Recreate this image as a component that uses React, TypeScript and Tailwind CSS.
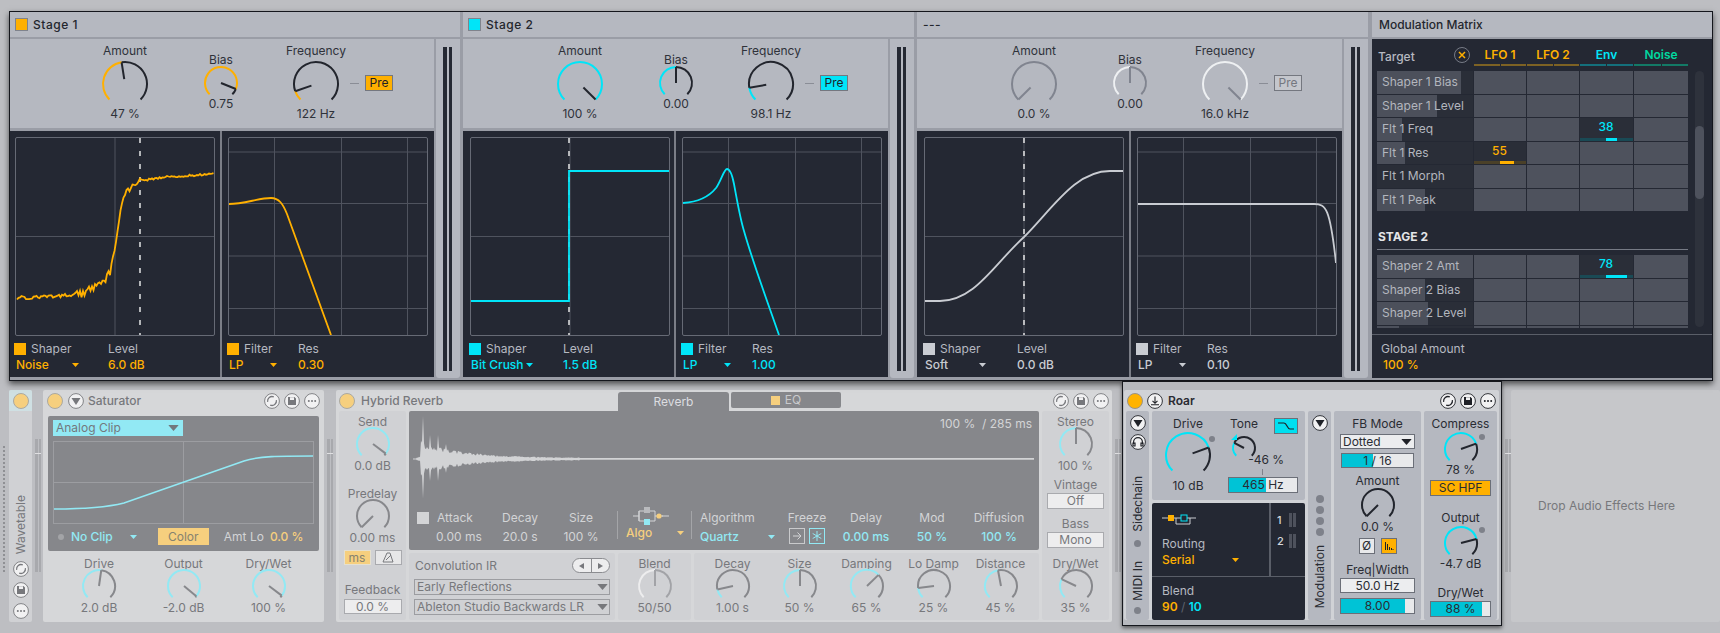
import type { ReactNode } from "react";

const ORANGE = "#ffb000";
const CYAN = "#00e5f8";
const SOFT_CYAN = "#92e9f4";

// build a knob arc between two normalised values
function arc(cx: number, cy: number, r: number, a: number, b: number) {
  const pt = (p: number) => {
    const t = ((-135 + 270 * p) * Math.PI) / 180;
    return `${(cx + r * Math.sin(t)).toFixed(2)} ${(cy - r * Math.cos(t)).toFixed(2)}`;
  };
  const large = (b - a) * 270 > 180 ? 1 : 0;
  return `M${pt(a)} A${r} ${r} 0 ${large} 1 ${pt(b)}`;
}

function Knob({ r, pct, fill, track, needle, start = 0 }: { r: number; pct: number; fill: string; track: string; needle?: string; start?: number }) {
  const c = r + 2;
  const h = c + Math.ceil(r * 0.8);
  const t = ((-135 + 270 * pct) * Math.PI) / 180;
  return (
    <svg width={c * 2} height={h} className="block shrink-0" aria-hidden="true">
      {pct < 1 && <path d={arc(c, c, r, Math.max(pct, 0.001), 1)} fill="none" stroke={track} strokeWidth="2" />}
      {pct > 0 && <path d={arc(c, c, r, 0, pct)} fill="none" stroke={fill} strokeWidth="2" />}
      <line
        x1={c + r * start * Math.sin(t)}
        y1={c - r * start * Math.cos(t)}
        x2={c + r * Math.sin(t)}
        y2={c - r * Math.cos(t)}
        stroke={needle ?? track}
        strokeWidth="2"
      />
    </svg>
  );
}

function Cell(props: {
  w: string;
  label: string;
  value: string;
  r?: number;
  pct: number;
  fill: string;
  track: string;
  needle?: string;
  start?: number;
  knobClass?: string;
  textClass?: string;
}) {
  const { w, label, value, r = 16, pct, fill, track, needle, start, knobClass = "-mt-[3px] mb-[2px]", textClass = "text-[#77787c]" } = props;
  return (
    <div className={`${w} flex flex-col items-center shrink-0 text-[12px] leading-[14px] whitespace-nowrap ${textClass}`}>
      <span>{label}</span>
      <div className={knobClass}>
        <Knob r={r} pct={pct} fill={fill} track={track} needle={needle} start={start} />
      </div>
      <span>{value}</span>
    </div>
  );
}

/* ---------- graphs ---------- */

function lerp(points: number[][], x: number) {
  for (let i = 1; i < points.length; i++) {
    if (x <= points[i][0]) {
      const [x0, y0] = points[i - 1];
      const [x1, y1] = points[i];
      return y0 + ((y1 - y0) * (x - x0)) / (x1 - x0);
    }
  }
  return points[points.length - 1][1];
}

function rnd(n: number) {
  const v = Math.sin(n * 12.9898) * 43758.5453;
  return v - Math.floor(v);
}

const noiseCurve = (() => {
  const keys = [[1, 160], [40, 158], [65, 156], [85, 147], [94, 135], [99, 112], [102, 93], [105, 72], [108, 56], [115, 50], [123, 43], [151, 39], [198, 36]];
  const out: string[] = [];
  for (let x = 1; x <= 198; x += 1.5) {
    const amp = x < 60 ? 3.5 : x < 108 ? 8 : x < 125 ? 4.5 : 2;
    out.push(`${x} ${(lerp(keys, x) + (rnd(x) - 0.5) * amp).toFixed(1)}`);
  }
  return "M" + out.join(" L");
})();

const reverbShape = (() => {
  const amp = (x: number) => {
    if (x < 8) return 0.6;
    let a = x < 12 ? 2 : 1 + 15 * Math.exp(-(x - 12) / 42);
    if (x > 170) a = 0.9;
    else a *= 0.65 + rnd(x * 3) * 0.5;
    if (Math.abs(x - 14) < 1) a = 43;
    if (Math.abs(x - 21) < 1) a = 24;
    if (Math.abs(x - 29) < 1) a = 24;
    if (Math.abs(x - 37) < 1) a = 15;
    return a;
  };
  const top: string[] = [];
  const bottom: string[] = [];
  for (let x = 4; x <= 625; x += 1) {
    top.push(`${x} ${(48 - amp(x)).toFixed(1)}`);
    bottom.unshift(`${x} ${(48 + amp(x) * 0.92).toFixed(1)}`);
  }
  return "M" + top.concat(bottom).join(" L") + "Z";
})();

function Graph({ children }: { children: ReactNode }) {
  return (
    <svg width="200" height="199" className="block rounded-[2px] border border-[#666a75]" viewBox="0 0 198 197" aria-hidden="true">
      {children}
    </svg>
  );
}

function ShaperGraph({ curve, color, dash, width = 1.8 }: { curve: string; color: string; dash: number; width?: number }) {
  return (
    <Graph>
      <line x1="99" y1="0" x2="99" y2="197" stroke="#4f535e" />
      <line x1="0" y1="98.5" x2="198" y2="98.5" stroke="#4f535e" />
      <line x1={dash} y1="0" x2={dash} y2="197" stroke="#f2f2f2" strokeWidth="1.4" strokeDasharray="5 8" />
      <path d={curve} fill="none" stroke={color} strokeWidth={width} />
    </Graph>
  );
}

function FilterGraph({ curve, color }: { curve: string; color: string }) {
  return (
    <Graph>
      {[45.5, 112.5, 178.5].map((x) => (
        <line key={x} x1={x} y1="0" x2={x} y2="197" stroke="#4f535e" />
      ))}
      {[14, 65.5, 118, 170.5].map((y) => (
        <line key={y} x1="0" y1={y} x2="198" y2={y} stroke="#4f535e" />
      ))}
      <path d={curve} fill="none" stroke={color} strokeWidth="1.8" />
    </Graph>
  );
}

function Caret({ color, className = "" }: { color: string; className?: string }) {
  return (
    <svg width="7" height="4" viewBox="0 0 7 4" className={`block ${className}`} aria-hidden="true">
      <path d="M0 0H7L3.5 4Z" fill={color} />
    </svg>
  );
}

/* ---------- top window ---------- */

function GraphFooter(props: { color: string; cols: string; a: string; mode: string; b: string; value: string; caretGap: string }) {
  const { color, cols, a, mode, b, value, caretGap } = props;
  return (
    <div className={`grid ${cols} mt-[6px] text-[12px] leading-[14px] gap-y-[2px] whitespace-nowrap`}>
      <div className="flex items-center text-[#b6b9c1]">
        <span className="w-[12px] h-[12px] mr-[5px] -ml-[1px]" style={{ background: color }} />
        {a}
      </div>
      <div className="text-[#b6b9c1]">{b}</div>
      <div className="flex items-center font-medium relative pl-[1px]" style={{ color }}>
        {mode}
        <Caret color={color} className={caretGap} />
      </div>
      <div className="font-medium" style={{ color }}>{value}</div>
    </div>
  );
}

function Stage(props: {
  w: string;
  title: string;
  square?: string;
  knobs: string;
  pad: string;
  left: string;
  color: string;
  accent: string;
  track: string;
  needle: string;
  amount: [number, string];
  bias: [number, string];
  freq: [number, string];
  shaper: string;
  dash: number;
  filter: string;
  mode: string;
  modeGap: string;
  level: string;
  res: string;
  preClass: string;
}) {
  const { w, title, square, knobs, pad, left, color, accent, track, needle, amount, bias, freq, shaper, dash, filter, mode, modeGap, level, res, preClass } = props;
  const text = "text-[#2f323a]";
  return (
    <section className={`${w} shrink-0 flex flex-col`}>
      <div className="h-[25px] bg-[#b5b8c0] flex items-center pl-[5px] text-[12px] text-[#23262d] font-medium tracking-[0.5px]">
        {square && <span className="w-[13px] h-[13px] mr-[5px] border border-[#7f838c]" style={{ background: square }} />}
        {!square && <span className="w-[1px]" />}
        {title}
      </div>
      <div className="flex gap-[2px] mt-[2px] h-[339px]">
        <div className="flex-1 flex flex-col gap-[3px]">
          <div className={`h-[89px] bg-[#b5b8c0] flex items-start ${knobs}`}>
            <div className="pt-[5px]">
              <Cell w="w-[100px]" label="Amount" value={amount[1]} r={22} pct={amount[0]} fill={color} track={track} needle={needle} start={0.22} knobClass="mt-[2px] mb-[5px]" textClass={text} />
            </div>
            <div className="pt-[14px] ml-[16px]">
              <Cell w="w-[60px]" label="Bias" value={bias[1]} pct={bias[0]} fill={color} track={track} needle={needle} knobClass="-mt-[2px] mb-[1px]" textClass={text} />
            </div>
            <div className="pt-[5px] ml-[15px]">
              <Cell w="w-[100px]" label="Frequency" value={freq[1]} r={22} pct={freq[0]} fill={color} track={track} needle={needle} start={0.22} knobClass="mt-[2px] mb-[5px]" textClass={text} />
            </div>
            <div className="flex items-center mt-[36px] -ml-[16px]">
              <span className="w-[9px] h-px bg-[#8a8d96]" />
              <span className={`ml-[6px] w-[28px] h-[16px] flex items-center justify-center text-[12px] border ${preClass}`}>Pre</span>
            </div>
          </div>
          <div className="h-[246px] bg-[#242833] flex">
            <div className={`${left} bg-[#242833] pt-[6px] ${pad} shrink-0`}>
              <ShaperGraph curve={shaper} color={accent} dash={dash} />
              <GraphFooter color={accent} cols="grid-cols-[93px_1fr]" a="Shaper" mode={mode} b="Level" value={level} caretGap={modeGap} />
            </div>
            <div className="w-[2px] bg-[#7b7e87]" />
            <div className="flex-1 pt-[6px] pl-[6px]">
              <FilterGraph curve={filter} color={accent} />
              <GraphFooter color={accent} cols="grid-cols-[70px_1fr]" a="Filter" mode="LP" b="Res" value={res} caretGap="ml-[27px]" />
            </div>
          </div>
        </div>
        <div className="w-[24px] bg-[#b5b8c0] rounded-b-[3px] pt-[8px] pl-[7px]">
          <div className="flex gap-[2px] h-[324px]">
            <span className="w-[3.5px] bg-[#252933]" />
            <span className="w-[3.5px] bg-[#252933]" />
          </div>
        </div>
      </div>
    </section>
  );
}

const targetsA: [string, number][] = [
  ["Shaper 1 Bias", 87],
  ["Shaper 1 Level", 62],
  ["Flt 1 Freq", 26],
  ["Flt 1 Res", 29],
  ["Flt 1 Morph", 0],
  ["Flt 1 Peak", 50],
];
const targetsB: [string, number][] = [
  ["Shaper 2 Amt", 100],
  ["Shaper 2 Bias", 50],
  ["Shaper 2 Level", 53],
  ["", 23],
];

function MatrixRow({ name, pct, active }: { name: string; pct: number; active?: { col: number; value: string; color: string; barLeft: string; barWidth: string; dim: string } }) {
  return (
    <div className="contents">
      <div className="h-[22.5px] bg-[#2a2e38] relative flex items-center">
        <div className="absolute inset-y-0 left-0 bg-[#4c505b]" style={{ width: `${pct}%` }} />
        <span className="relative pl-[5px] text-[12px] text-[#b3b6be] whitespace-nowrap">{name}</span>
      </div>
      {[0, 1, 2, 3].map((col) =>
        active && active.col === col ? (
          <div key={col} className="h-[22.5px] bg-[#2a2e38] flex flex-col items-center justify-between">
            <span className="text-[12px] leading-[18px] font-medium pr-[1px]" style={{ color: active.color }}>{active.value}</span>
            <span className="block w-full h-[3px] relative" style={{ background: active.dim }}>
              <span className={`absolute top-0 h-[3px] ${active.barLeft} ${active.barWidth}`} style={{ background: active.color }} />
            </span>
          </div>
        ) : (
          <div key={col} className="h-[22.5px] bg-[#4e525d]" />
        ),
      )}
    </div>
  );
}

function ModMatrix() {
  const grid = "grid grid-cols-[96px_52px_52px_53px_54px] gap-x-[1px] gap-y-[1px]";
  const heads: [string, string, string][] = [
    ["LFO 1", ORANGE, "#7d6224"],
    ["LFO 2", ORANGE, "#7d6224"],
    ["Env", CYAN, "#14707c"],
    ["Noise", "#00d9a0", "#137a66"],
  ];
  return (
    <section className="w-[340px] ml-[1px] shrink-0 flex flex-col">
      <div className="h-[25px] bg-[#b5b8c0] flex items-center pl-[7px] text-[12px] text-[#23262d] font-medium">Modulation Matrix</div>
      <div className="mt-[2px] h-[339px] bg-[#242833] flex flex-col">
        <div className="h-[295px] pl-[5px]">
          <div className={`${grid} pt-[8px] h-[32px]`}>
            <div className="flex items-start justify-between pr-[3px] text-[12px] text-[#b6b9c1]">
              <span className="pl-[1px] pt-[1px] font-medium">Target</span>
              <span className="w-[16px] h-[16px] rounded-full border border-[#777b86] flex items-center justify-center">
                <svg width="8" height="8" viewBox="0 0 8 8" aria-hidden="true">
                  <path d="M1 1L7 7M7 1L1 7" stroke={ORANGE} strokeWidth="1.5" />
                </svg>
              </span>
            </div>
            {heads.map(([t, c, dim]) => (
              <div key={t} className="flex flex-col items-center">
                <span className="text-[12px] leading-[15px] font-semibold" style={{ color: c }}>{t}</span>
                <span className="flex gap-[1px] w-full h-[2px] mt-[2px]">
                  <span className="flex-1" style={{ background: dim }} />
                  <span className="flex-1" style={{ background: dim }} />
                </span>
              </div>
            ))}
          </div>
          <div className="flex">
            <div className="w-[311px] h-[257px] overflow-hidden">
              <div className={grid}>
                {targetsA.map(([n, p]) => (
                  <MatrixRow
                    key={n}
                    name={n}
                    pct={p}
                    active={
                      n === "Flt 1 Freq"
                        ? { col: 2, value: "38", color: CYAN, barLeft: "left-[26px]", barWidth: "w-[11px]", dim: "#1a4a55" }
                        : n === "Flt 1 Res"
                          ? { col: 0, value: "55", color: ORANGE, barLeft: "left-[26px]", barWidth: "w-[14px]", dim: "#4a4028" }
                          : undefined
                    }
                  />
                ))}
              </div>
              <div className="h-[39px] flex items-end pb-[5px] pl-[1px] text-[12px] font-bold text-[#e4e5e8] leading-[14px] border-b border-[#767a85]">STAGE 2</div>
              <div className={`${grid} mt-[5px]`}>
                {targetsB.map(([n, p]) => (
                  <MatrixRow
                    key={n || "clipped"}
                    name={n}
                    pct={p}
                    active={n === "Shaper 2 Amt" ? { col: 2, value: "78", color: CYAN, barLeft: "left-[26px]", barWidth: "w-[21px]", dim: "#1a4a55" } : undefined}
                  />
                ))}
              </div>
            </div>
            <div className="w-[9px] h-[256px] ml-[7px] rounded-full bg-[#2e323c] pt-[55px]">
              <div className="h-[73px] rounded-full bg-[#4e525d]" />
            </div>
          </div>
        </div>
        <div className="h-px bg-[#5a5e68]" />
        <div className="pl-[9px] pt-[6px] text-[12px] leading-[16px]">
          <div className="text-[#b6b9c1]">Global Amount</div>
          <div className="pl-[2px] font-medium text-[#ffb000]">100 %</div>
        </div>
      </div>
    </section>
  );
}

/* ---------- device chrome ---------- */

function CircleIcon({ kind, dark = false }: { kind: "sync" | "save" | "more" | "down" | "save-arrow" | "phones"; dark?: boolean }) {
  const c = dark ? "#1f2127" : "#77787c";
  return (
    <svg width="16" height="16" viewBox="0 0 16 16" className="block shrink-0" aria-hidden="true">
      <circle cx="8" cy="8" r="7.4" fill="#f1f1f2" stroke={c} strokeWidth="0.9" />
      {kind === "sync" && (
        <g fill="none" stroke={c} strokeWidth="1.3">
          <path d="M3.6 8.8A4.5 4.5 0 0 1 9.8 3.9" />
          <path d="M12.4 7.2A4.5 4.5 0 0 1 6.2 12.1" />
        </g>
      )}
      {kind === "save" && <path d="M4 4H10.5L12 5.5V12H4ZM6 4.2V7H10V4.2Z" fill={c} fillRule="evenodd" />}
      {kind === "more" && (
        <g fill={c}>
          <circle cx="4.8" cy="8" r="1" />
          <circle cx="8" cy="8" r="1" />
          <circle cx="11.2" cy="8" r="1" />
        </g>
      )}
      {kind === "down" && <path d="M3.5 5H12.5L8 12Z" fill={c} />}
      {kind === "save-arrow" && <path d="M8 3.5V10M5.5 7.8L8 10.3L10.5 7.8M4 11.8H12" fill="none" stroke={c} strokeWidth="1.1" />}
      {kind === "phones" && <path d="M3.6 10V8A4.4 4.4 0 0 1 12.4 8V10M3 9H5V12H3ZM11 9H13V12H11Z" fill="none" stroke={c} strokeWidth="1.2" />}
    </svg>
  );
}

function Led({ color = "#f6cf7e", border = "#aaa9a2" }: { color?: string; border?: string }) {
  return <span className="w-[16px] h-[16px] rounded-full shrink-0 border" style={{ background: color, borderColor: border }} />;
}

function Grip() {
  return (
    <div className="w-[6px] ml-[3px] mt-[49px] h-[133px] flex flex-col shrink-0">
      <div className="h-[14px] flex gap-[1px]">
        <span className="flex-1 bg-[#a8a9ad]" />
        <span className="flex-1 bg-[#a8a9ad]" />
      </div>
      <div className="h-[1px] bg-[#e0e0e2]" />
      <div className="flex-1 flex gap-[1px]">
        <span className="flex-1 bg-[#a8a9ad]" />
        <span className="flex-1 bg-[#a8a9ad]" />
      </div>
    </div>
  );
}

function Vertical({ children, className = "" }: { children: ReactNode; className?: string }) {
  return <span className={`[writing-mode:vertical-rl] rotate-180 whitespace-nowrap text-[12px] leading-[14px] ${className}`}>{children}</span>;
}

function Saturator() {
  return (
    <div className="w-[281px] ml-[2px] h-[232px] bg-[#d6d7d9] rounded-[2px] shrink-0">
      <div className="h-[21px] flex items-center px-[4px] gap-[5px]">
        <Led />
        <CircleIcon kind="down" />
        <span className="text-[12px] font-medium text-[#77787c] ml-[-1px]">Saturator</span>
        <div className="ml-auto flex gap-[4px] pr-[0px]">
          <CircleIcon kind="sync" />
          <CircleIcon kind="save" />
          <CircleIcon kind="more" />
        </div>
      </div>
      <div className="mx-[5px] mt-[5px] h-[135px] bg-[#86878b] rounded-[2px] pt-[4px] pl-[5px]">
        <div className="w-[130px] h-[16px] bg-[#92e9f4] flex items-center justify-between px-[3px] text-[12px] text-[#72787d]">
          Analog Clip
          <Caret color="#72787d" className="scale-150 mr-[3px]" />
        </div>
        <svg width="261" height="83" className="block mt-[5px] border border-[#9c9da1]" viewBox="0 0 259 81" aria-hidden="true">
          <line x1="129.5" y1="0" x2="129.5" y2="81" stroke="#9c9da1" />
          <line x1="0" y1="40.5" x2="259" y2="40.5" stroke="#9c9da1" />
          <path d="M0 67 C30 67 50 66 70 61 L190 19 C205 14 225 14 259 14" fill="none" stroke={SOFT_CYAN} strokeWidth="1.6" />
        </svg>
        <div className="flex items-center h-[17px] mt-[4px] text-[12px]">
          <span className="w-[6px] h-[6px] rounded-full bg-[#a3a4a7] ml-[5px]" />
          <span className="ml-[7px] text-[#92e9f4] font-medium">No Clip</span>
          <Caret color={SOFT_CYAN} className="ml-[17px]" />
          <span className="ml-[21px] w-[51px] h-[17px] bg-[#f6cf7e] flex items-center justify-center text-[#85826f]">Color</span>
          <span className="ml-[15px] text-[#d3d4d6]">Amt Lo</span>
          <span className="ml-[6px] font-medium text-[#f6cf7e]">0.0 %</span>
        </div>
      </div>
      <div className="flex pl-[14px] mt-[6px]">
        <Cell w="w-[84px]" label="Drive" value="2.0 dB" pct={0.53} fill={SOFT_CYAN} track="#87888c" />
        <Cell w="w-[85px]" label="Output" value="-2.0 dB" pct={0.98} fill={SOFT_CYAN} track="#87888c" />
        <Cell w="w-[85px]" label="Dry/Wet" value="100 %" pct={0.97} fill={SOFT_CYAN} track="#87888c" needle="#87888c" />
      </div>
    </div>
  );
}

function AlgoIcon() {
  return (
    <svg width="36" height="18" viewBox="0 0 36 18" className="block ml-[7px]" aria-hidden="true">
      <path d="M0 9H6M30 9H22M6 4H22V14H6ZM6 4V14" fill="none" stroke="#d3d4d6" strokeWidth="1" />
      <rect x="11" y="0" width="6" height="6" fill="#b9babd" />
      <rect x="11" y="12" width="6" height="6" fill={SOFT_CYAN} />
      <circle cx="26" cy="9" r="2.6" fill="#f6cf7e" />
      <path d="M29 9H36" stroke="#d3d4d6" />
    </svg>
  );
}

function Reverb() {
  const ctl = "text-[12px] leading-[14px] whitespace-nowrap";
  const knob = { fill: SOFT_CYAN, track: "#87888c" };
  return (
    <div className="w-[776px] ml-[3px] h-[232px] bg-[#d6d7d9] rounded-[2px] shrink-0">
      <div className="h-[21px] flex">
        <div className="w-[282px] flex items-center pl-[3px] gap-[6px] shrink-0">
          <Led />
          <span className="text-[12px] font-medium text-[#77787c]">Hybrid Reverb</span>
        </div>
        <div className="w-[111px] h-[19px] mt-[2px] rounded-t-[3px] bg-[#86878b] flex items-center justify-center text-[12px] text-[#dcdde0]">Reverb</div>
        <div className="w-[110px] h-[16px] mt-[2px] ml-[2px] rounded-[2px] bg-[#86878b] flex items-center justify-center gap-[5px] text-[12px] text-[#c9cacc]">
          <span className="w-[9px] h-[9px] bg-[#f6cf7e]" />
          EQ
        </div>
        <div className="ml-auto flex items-center gap-[4px] pr-[3px]">
          <CircleIcon kind="sync" />
          <CircleIcon kind="save" />
          <CircleIcon kind="more" />
        </div>
      </div>
      <div className="flex gap-[3px] pl-[3px]">
        {/* send column */}
        <div className="w-[67px] h-[209px] bg-[#d0d1d4] rounded-[2px] flex flex-col items-center pt-[4px] text-[#77787c]">
          <Cell w="w-full" label="Send" value="0.0 dB" pct={0.97} {...knob} needle="#87888c" />
          <div className="mt-[14px]">
            <Cell w="w-[67px]" label="Predelay" value="0.00 ms" pct={0} {...knob} />
          </div>
          <div className="flex gap-[4px] mt-[5px]">
            <span className="w-[27px] h-[15px] bg-[#f6cf7e] border border-[#e5e0cf] flex items-center justify-center text-[12px] text-[#85826f]">ms</span>
            <span className="w-[27px] h-[15px] bg-[#e7e7e8] border border-[#a9aaae] flex items-center justify-center">
              <svg width="12" height="11" viewBox="0 0 12 11" aria-hidden="true">
                <path d="M1 10H11L8 1H5ZM4 8L9 3" fill="none" stroke="#77787c" />
              </svg>
            </span>
          </div>
          <span className="mt-[18px] text-[12px] leading-[14px]">Feedback</span>
          <span className="w-[58px] h-[15px] mt-[2px] bg-[#ededee] border border-[#a9aaae] flex items-center justify-center text-[12px]">0.0 %</span>
        </div>
        {/* main column */}
        <div className="w-[630px] shrink-0">
          <div className="h-[139px] bg-[#86878b] rounded-[2px] relative">
            <svg width="630" height="94" className="block" aria-hidden="true">
              <path d={reverbShape} fill="#d2d3d5" />
            </svg>
            <span className="absolute right-[7px] top-[4px] text-[12px] text-[#d3d4d6]">100 %&nbsp; / 285 ms</span>
            <div className={`flex mt-[6px] ${ctl} text-[#d3d4d6]`}>
              <div className="w-[74px] ml-[8px] shrink-0">
                <div className="flex items-center">
                  <span className="w-[12px] h-[12px] bg-[#d3d4d6] mr-[8px]" />
                  Attack
                </div>
                <div className="pl-[19px] mt-[5px]">0.00 ms</div>
              </div>
              <div className="w-[58px] text-center shrink-0">
                <div>Decay</div>
                <div className="mt-[5px]">20.0 s</div>
              </div>
              <div className="w-[64px] text-center shrink-0">
                <div>Size</div>
                <div className="mt-[5px]">100 %</div>
              </div>
              <span className="w-px h-[28px] ml-[4px] bg-[#a4a5a8] shrink-0" />
              <div className="w-[59px] ml-[8px] shrink-0 -mt-[4px]">
                <AlgoIcon />
                <div className="flex items-center font-medium text-[#f6cf7e] mt-[1px]">
                  Algo
                  <Caret color="#f6cf7e" className="ml-[25px]" />
                </div>
              </div>
              <span className="w-px h-[28px] ml-[6px] bg-[#a4a5a8] shrink-0" />
              <div className="w-[80px] ml-[8px] shrink-0">
                <div>Algorithm</div>
                <div className="flex items-center mt-[5px] font-medium text-[#92e9f4]">
                  Quartz
                  <Caret color={SOFT_CYAN} className="ml-[29px]" />
                </div>
              </div>
              <div className="w-[54px] shrink-0 flex flex-col items-center">
                <span>Freeze</span>
                <div className="flex gap-[4px] mt-[3px]">
                  <span className="w-[16px] h-[16px] border border-[#c9cacc] flex items-center justify-center">
                    <svg width="10" height="10" viewBox="0 0 10 10" aria-hidden="true">
                      <path d="M1 5H9M5.5 1.5L9 5L5.5 8.5" fill="none" stroke="#d3d4d6" />
                    </svg>
                  </span>
                  <span className="w-[16px] h-[16px] border border-[#92e9f4] flex items-center justify-center">
                    <svg width="10" height="10" viewBox="0 0 10 10" aria-hidden="true">
                      <path d="M5 0V10M.7 2.5L9.3 7.5M9.3 2.5L.7 7.5" fill="none" stroke={SOFT_CYAN} />
                    </svg>
                  </span>
                </div>
              </div>
              {[["Delay", "0.00 ms", "w-[64px]"], ["Mod", "50 %", "w-[68px]"], ["Diffusion", "100 %", "w-[66px]"]].map(([a, b, w]) => (
                <div key={a} className={`${w} text-center shrink-0`}>
                  <div>{a}</div>
                  <div className="mt-[5px] font-medium text-[#92e9f4]">{b}</div>
                </div>
              ))}
            </div>
          </div>
          <div className="flex gap-[3px] mt-[3px] h-[67px]">
            <div className="w-[206px] bg-[#d0d1d4] rounded-[2px] pl-[5px] pt-[5px] text-[12px] text-[#77787c]">
              <div className="flex items-center h-[15px] justify-between pr-[5px] pl-[1px]">
                Convolution IR
                <span className="w-[38px] h-[15px] rounded-full border border-[#8b8c90] bg-[#ededee] flex">
                  <span className="flex-1 flex items-center justify-center border-r border-[#8b8c90]">
                    <svg width="5" height="6" viewBox="0 0 5 6" aria-hidden="true"><path d="M5 0V6L0 3Z" fill="#77787c" /></svg>
                  </span>
                  <span className="flex-1 flex items-center justify-center">
                    <svg width="5" height="6" viewBox="0 0 5 6" aria-hidden="true"><path d="M0 0V6L5 3Z" fill="#77787c" /></svg>
                  </span>
                </span>
              </div>
              {["Early Reflections", "Ableton Studio Backwards LR"].map((t, i) => (
                <div key={t} className={`w-[196px] h-[16px] border border-[#9c9da1] flex items-center justify-between pl-[2px] pr-[2px] ${i === 0 ? "mt-[6px]" : "mt-[4px]"}`}>
                  {t}
                  <Caret color="#77787c" className="scale-150 mr-[1px]" />
                </div>
              ))}
            </div>
            <div className="w-[73px] bg-[#d0d1d4] rounded-[2px] pt-[4px]">
              <Cell w="w-full" label="Blend" value="50/50" pct={0.5} fill="#ededee" track="#a2a3a7" />
            </div>
            <div className="flex-1 bg-[#d0d1d4] rounded-[2px] pt-[4px] pl-[5px] flex">
              <Cell w="w-[67px]" label="Decay" value="1.00 s" pct={0.12} {...knob} />
              <Cell w="w-[67px]" label="Size" value="50 %" pct={0.5} {...knob} />
              <Cell w="w-[67px]" label="Damping" value="65 %" pct={0.67} {...knob} />
              <Cell w="w-[67px]" label="Lo Damp" value="25 %" pct={0.14} {...knob} />
              <Cell w="w-[67px]" label="Distance" value="45 %" pct={0.46} {...knob} />
            </div>
          </div>
        </div>
        {/* output column */}
        <div className="w-[67px] h-[209px] bg-[#d0d1d4] rounded-[2px] flex flex-col items-center pt-[4px] text-[12px] leading-[14px] text-[#77787c]">
          <Cell w="w-full" label="Stereo" value="100 %" pct={0.5} {...knob} />
          <span className="mt-[5px]">Vintage</span>
          <span className="w-[57px] h-[16px] mt-[1px] bg-[#ededee] border border-[#a9aaae] flex items-center justify-center">Off</span>
          <span className="mt-[8px]">Bass</span>
          <span className="w-[57px] h-[16px] mt-[1px] bg-[#ededee] border border-[#a9aaae] flex items-center justify-center">Mono</span>
          <div className="mt-[9px] w-full">
            <Cell w="w-full" label="Dry/Wet" value="35 %" pct={0.26} {...knob} />
          </div>
        </div>
      </div>
    </div>
  );
}

function Roar() {
  const ink = "text-[#2a2c33]";
  const dark = { fill: CYAN, track: "#22252d", needle: "#22252d" };
  return (
    <div className="relative z-20 w-[380px] ml-[1px] -mt-[9px] h-[245px] border border-[#15171c] bg-[#b7b9be] pt-[8px] pl-[1px] shadow-[0_2px_4px_rgba(0,0,0,0.55)] shrink-0">
      <div className="w-[375px] h-[230px] bg-[#d0d2d6] rounded-[2px]">
        <div className="h-[21px] flex items-center pl-[3px] pr-[3px] gap-[4px]">
          <Led color="#ffb300" border="#9a9388" />
          <CircleIcon kind="save-arrow" dark />
          <span className={`text-[12px] font-semibold ml-[1px] ${ink}`}>Roar</span>
          <div className="ml-auto flex gap-[4px]">
            <CircleIcon kind="sync" dark />
            <CircleIcon kind="save" dark />
            <CircleIcon kind="more" dark />
          </div>
        </div>
        <div className={`flex gap-[3px] pl-[2px] text-[12px] leading-[14px] ${ink}`}>
          {/* sidechain strip */}
          <div className="w-[23px] h-[209px] bg-[#b5b8c0] rounded-[2px] flex flex-col items-center pt-[4px]">
            <CircleIcon kind="down" dark />
            <div className="mt-[3px]"><CircleIcon kind="phones" dark /></div>
            <Vertical className="mt-[26px]">Sidechain</Vertical>
            <span className="w-[7px] h-[7px] rounded-full bg-[#7e818a] mt-[8px]" />
            <Vertical className="mt-[14px]">MIDI In</Vertical>
            <span className="w-[7px] h-[7px] rounded-full bg-[#7e818a] mt-[7px]" />
          </div>
          {/* drive + routing */}
          <div className="w-[153px] flex flex-col gap-[3px]">
            <div className="h-[89px] bg-[#b5b8c0] rounded-[2px] flex">
              <div className="relative pt-[6px]">
                <Cell w="w-[72px]" label="Drive" value="10 dB" r={22} pct={0.76} {...dark} start={0.22} knobClass="mt-[0px] mb-[6px]" textClass={ink} />
                <span className="absolute left-[57px] top-[25px] w-[6px] h-[6px] rounded-full bg-[#7e818a]" />
              </div>
              <div className="w-[81px] pt-[6px]">
                <div className="flex items-start">
                  <span className="w-[40px] text-center">Tone</span>
                  <span className="ml-[10px] mt-[1px] w-[24px] h-[16px] bg-[#00e0f0] border border-[#6b6f78] flex items-center justify-center">
                    <svg width="18" height="10" viewBox="0 0 18 10" aria-hidden="true">
                      <path d="M1 2H7C10 2 10 8 13 8H17" fill="none" stroke="#1d2027" strokeWidth="1.2" />
                    </svg>
                  </span>
                </div>
                <div className="ml-[7px] mt-[1px] relative">
                  <svg width="6" height="6" viewBox="0 0 6 6" className="absolute -left-[0px] top-[-1px]" aria-hidden="true"><path d="M0 6L6 0V6Z" fill={CYAN} /></svg>
                  <Knob r={11} pct={0.27} fill={CYAN} track="#22252d" needle="#22252d" />
                </div>
                <div className="-mt-[4px] text-right pr-[21px]">-46 %</div>
                <div className="h-[6px] mt-[2px] ml-[38px] w-px bg-[#7e818a]" />
                <div className="ml-[4px] mt-[2px] w-[70px] h-[16px] border border-[#6b6f78] bg-[#e8e9eb] relative overflow-hidden flex">
                  <span className="absolute inset-y-0 left-0 w-[37px] bg-[#00c3d6]" />
                  <span className="relative w-full text-center pl-[0px]">465 Hz</span>
                </div>
              </div>
            </div>
            <div className="h-[117px] bg-[#242833] rounded-[2px] flex flex-col text-[#b6b9c1]">
              <div className="h-[73px] flex">
                <div className="w-[117px] pl-[10px] pt-[11px]">
                  <svg width="34" height="12" viewBox="0 0 34 12" className="block" aria-hidden="true">
                    <path d="M0 4H34M14 4V10H28V4" fill="none" stroke="#c9ccd2" />
                    <rect x="6" y="1" width="6" height="6" fill={ORANGE} />
                    <rect x="19" y="1" width="6" height="6" fill="#242833" stroke={CYAN} />
                  </svg>
                  <div className="mt-[11px]">Routing</div>
                  <div className="flex items-center mt-[2px] font-medium text-[#ffb000]">
                    Serial
                    <Caret color={ORANGE} className="ml-[38px]" />
                  </div>
                </div>
                <div className="w-[2px] bg-[#5a5e68]" />
                <div className="pl-[6px] pt-[9px] flex flex-col gap-[6px] text-[11px] font-medium text-[#d6d8dc]">
                  {["1", "2"].map((n) => (
                    <div key={n} className="flex items-center h-[15px]">
                      <span className="w-[12px]">{n}</span>
                      <span className="flex gap-px h-[14px]">
                        <span className="w-[3px] bg-[#4e525d]" />
                        <span className="w-[3px] bg-[#4e525d]" />
                      </span>
                    </div>
                  ))}
                </div>
              </div>
              <div className="h-px bg-[#5a5e68]" />
              <div className="pl-[10px] pt-[6px] leading-[16px]">
                <div>Blend</div>
                <div className="font-semibold">
                  <span className="text-[#ffb000]">90</span>
                  <span className="text-[#5f636e] font-normal"> / </span>
                  <span className="text-[#00e5f8]">10</span>
                </div>
              </div>
            </div>
          </div>
          {/* modulation strip */}
          <div className="w-[23px] h-[209px] bg-[#b5b8c0] rounded-[2px] flex flex-col items-center pt-[4px]">
            <CircleIcon kind="down" dark />
            <div className="flex flex-col gap-[3px] mt-[64px]">
              {[0, 1, 2, 3].map((i) => (
                <span key={i} className="block w-[8px] h-[8px] rounded-full bg-[#7e818a]" />
              ))}
            </div>
            <Vertical className="mt-[9px]">Modulation</Vertical>
          </div>
          {/* feedback */}
          <div className="w-[87px] h-[209px] bg-[#b5b8c0] rounded-[2px] flex flex-col items-center pt-[6px]">
            <span>FB Mode</span>
            <span className="w-[75px] h-[15px] mt-[3px] bg-[#ecedef] border border-[#6b6f78] flex items-center justify-between px-[2px]">
              Dotted
              <Caret color="#1f2127" className="scale-150 mr-[2px]" />
            </span>
            <span className="w-[73px] h-[15px] mt-[4px] bg-[#e8e9eb] border border-[#6b6f78] relative flex justify-center">
              <span className="absolute inset-y-0 left-0 w-[31px] bg-[#00c3d6]" />
              <span className="relative">1 / 16</span>
            </span>
            <div className="mt-[6px]">
              <Cell w="w-[60px]" label="Amount" value="0.0 %" pct={0} {...dark} knobClass="-mt-[1px] mb-[2px]" textClass={ink} />
            </div>
            <div className="flex gap-[6px] mt-[4px]">
              <span className="w-[16px] h-[16px] bg-[#e8e9eb] border border-[#6b6f78] flex items-center justify-center">Ø</span>
              <span className="w-[16px] h-[16px] bg-[#ffb000] border border-[#6b6f78] flex items-center justify-center">
                <svg width="10" height="10" viewBox="0 0 10 10" aria-hidden="true">
                  <path d="M1.5 1V9M3.5 3V9M5.5 6V9M7.5 7V9M9 8V9" stroke="#1f2127" />
                </svg>
              </span>
            </div>
            <span className="mt-[9px]">Freq|Width</span>
            <span className="w-[75px] h-[15px] mt-[1px] bg-[#ecedef] border border-[#6b6f78] flex justify-center">50.0 Hz</span>
            <span className="w-[75px] h-[16px] mt-[5px] bg-[#e8e9eb] border border-[#6b6f78] relative flex justify-center">
              <span className="absolute inset-y-0 left-0 w-[64px] bg-[#00c3d6]" />
              <span className="relative">8.00</span>
            </span>
          </div>
          {/* output */}
          <div className="w-[73px] h-[209px] bg-[#b5b8c0] rounded-[2px] flex flex-col items-center pt-[6px]">
            <div className="relative">
              <Cell w="w-[73px]" label="Compress" value="78 %" pct={0.76} {...dark} knobClass="mt-[0px] mb-[1px]" textClass={ink} />
              <span className="absolute left-[55px] top-[17px] w-[6px] h-[6px] rounded-full bg-[#7e818a]" />
            </div>
            <span className="w-[61px] h-[16px] mt-[3px] bg-[#ffb000] border border-[#6b6f78] flex items-center justify-center">SC HPF</span>
            <div className="relative mt-[15px]">
              <Cell w="w-[73px]" label="Output" value="-4.7 dB" pct={0.78} {...dark} knobClass="mt-[0px] mb-[1px]" textClass={ink} />
              <span className="absolute left-[55px] top-[16px] w-[6px] h-[6px] rounded-full bg-[#7e818a]" />
            </div>
            <span className="mt-[15px]">Dry/Wet</span>
            <span className="w-[61px] h-[16px] mt-[1px] bg-[#e8e9eb] border border-[#6b6f78] relative flex justify-center">
              <span className="absolute inset-y-0 left-0 w-[51px] bg-[#00c3d6]" />
              <span className="relative">88 %</span>
            </span>
          </div>
        </div>
      </div>
    </div>
  );
}

export default function App() {
  return (
    <div className="w-[1720px] h-[633px] overflow-hidden bg-[#bdbec2] font-[family-name:Inter,sans-serif] pt-[11px]">
      <div className="relative z-10 ml-[9px] w-[1704px] h-[370px] border border-[#14161c] bg-[#9a9da6] flex gap-[3px] shadow-[0_3px_6px_rgba(0,0,0,0.6)]">
        <Stage
          w="w-[450px]"
          title="Stage 1"
          square={ORANGE}
          knobs="pl-[65px]"
          pad="pl-[5px]"
          left="w-[210px]"
          color={ORANGE}
          accent={ORANGE}
          track="#22252d"
          needle="#22252d"
          amount={[0.467, "47 %"]}
          bias={[0.915, "0.75"]}
          freq={[0.096, "122 Hz"]}
          shaper={noiseCurve}
          dash={124}
          filter="M0 66 C15 66 30 60 42 60 C50 60 54 66 58 76 L102 197"
          mode="Noise"
          modeGap="ml-[23px]"
          level="6.0 dB"
          res="0.30"
          preClass="bg-[#ffb000] border-[#74777f] text-[#1f2127]"
        />
        <Stage
          w="w-[451px]"
          title="Stage 2"
          square={CYAN}
          knobs="pl-[67px]"
          pad="pl-[7px]"
          left="w-[211px]"
          color={CYAN}
          accent={CYAN}
          track="#22252d"
          needle="#22252d"
          amount={[1, "100 %"]}
          bias={[0.5, "0.00"]}
          freq={[0.13, "98.1 Hz"]}
          shaper="M0 163 L98 163 L98 33 L198 33"
          dash={98}
          filter="M0 65 C15 64 25 60 33 50 C38 43 41 31 44 31 C47 31 49 36 51 46 C54 62 57 80 61 93 C70 125 85 165 96 197"
          mode="Bit Crush"
          modeGap="ml-[2px]"
          level="1.5 dB"
          res="1.00"
          preClass="bg-[#00e5f8] border-[#74777f] text-[#1f2127]"
        />
        <Stage
          w="w-[451px]"
          title="---"
          knobs="pl-[67px]"
          pad="pl-[7px]"
          left="w-[212px]"
          color="#eef0f2"
          accent="#c9ccd2"
          track="#80848f"
          needle="#80848f"
          amount={[0, "0.0 %"]}
          bias={[0.5, "0.00"]}
          freq={[1, "16.0 kHz"]}
          shaper="M0 163 L15 163 C50 163 70 125 99 99 C128 70 150 33 185 33 L198 33"
          dash={99}
          filter="M0 66 L176 66 C188 66 192 70 198 125"
          mode="Soft"
          modeGap="ml-[31px]"
          level="0.0 dB"
          res="0.10"
          preClass="bg-[#c4c6cc] border-[#74777f] text-[#74777f]"
        />
        <ModMatrix />
      </div>
      <div className="flex items-start mt-[9px] h-[232px]">
        <div className="w-[6px] ml-[1px] mt-[56px] flex flex-col gap-[2px] items-center shrink-0">
          {Array.from({ length: 32 }).map((_, i) => (
            <span key={i} className="block w-[2px] h-[2px] bg-[#8f9094]" />
          ))}
        </div>
        <div className="w-[23px] ml-[2px] h-[232px] bg-[#d0d1d4] rounded-[2px] flex flex-col items-center shrink-0 overflow-hidden">
          <div className="w-full h-[21px] bg-[#cfe0e3] flex items-center justify-center">
            <Led />
          </div>
          <Vertical className="mt-[84px] text-[#77787c]">Wavetable</Vertical>
          <div className="flex flex-col gap-[5px] mt-[7px]">
            <CircleIcon kind="sync" />
            <CircleIcon kind="save" />
            <CircleIcon kind="more" />
          </div>
        </div>
        <Grip />
        <Saturator />
        <Grip />
        <Reverb />
        <Grip />
        <Roar />
        <Grip />
        <div className="flex-1 h-[232px] bg-[#c6c7ca] rounded-[2px] flex items-center justify-center pr-[18px] text-[12px] text-[#77787c]">Drop Audio Effects Here</div>
      </div>
    </div>
  );
}
